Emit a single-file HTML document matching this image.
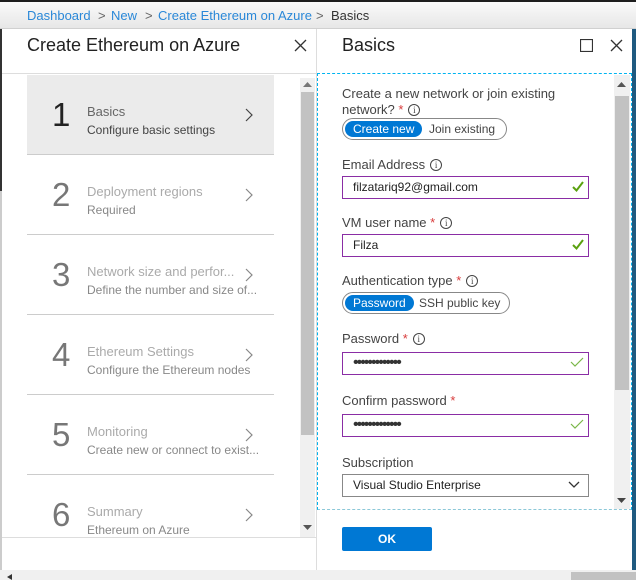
<!DOCTYPE html>
<html><head><meta charset="utf-8"><style>
*{margin:0;padding:0;box-sizing:border-box}
body{width:636px;height:580px;overflow:hidden;background:#fff;font-family:"Segoe UI","Liberation Sans",sans-serif;position:relative;color:#333}
.a{position:absolute}
.bc{left:0;top:0;width:636px;height:29px;background:linear-gradient(#1e1e1e 0,#1e1e1e 2px,#fafafa 2px,#e6e6e6 29px);border-bottom:1px solid #d0d0d0}
.bc span{position:absolute;top:8px;font-size:13px;color:#2a88d8}
.num{font-size:33px;color:#777;left:52px;font-weight:300}
.t1{left:87px;font-size:13px;color:#aaa}
.t2{left:87px;font-size:12px;color:#888}
.chev{left:244px}
.sep{left:27px;width:247px;height:1px;background:#ccc}
.lbl{left:342px;font-size:13px;color:#444}
.req{color:#d83b3b}
.info{display:inline-block;width:12px;height:12px;border:1px solid #444;border-radius:50%;font-size:9px;line-height:10px;text-align:center;vertical-align:1px;margin-left:5px;font-family:"Liberation Serif",serif;color:#444}
.inp{left:342px;width:247px;height:23px;border:1px solid #8a2da5;font-size:12px;padding:3px 0 0 10px;color:#222}
.pw{font-size:16px;padding-top:0;line-height:20px;letter-spacing:-2px;color:#333}
.ok{position:absolute;right:4px;top:2px}
.tog{left:342px;height:22px;border:1px solid #888;border-radius:11px;font-size:12px}
.tog b{position:absolute;top:2px;left:2px;height:16px;border-radius:8px;background:#0078d4;color:#fff;font-weight:normal;padding:0 8px;line-height:16px}
.tog i{position:absolute;top:2px;font-style:normal;line-height:16px;color:#444}
</style></head><body>
<div class="a bc"><span style="left:27px">Dashboard</span><span style="left:98px;color:#666">&gt;</span><span style="left:111px">New</span><span style="left:145px;color:#666">&gt;</span><span style="left:158px">Create Ethereum on Azure</span><span style="left:316px;color:#666">&gt;</span><span style="left:331px;color:#333">Basics</span></div>
<div class="a" style="left:0;top:29px;width:2px;height:162px;background:#333"></div>
<div class="a" style="left:0;top:191px;width:2px;height:379px;background:#ccc"></div>
<div class="a" style="left:632px;top:29px;width:4px;height:541px;background:#1f5a80"></div>
<div class="a" style="left:316px;top:29px;width:1px;height:541px;background:#ddd"></div>
<!-- left blade -->
<div class="a" style="left:27px;top:35px;font-size:18px;color:#222">Create Ethereum on Azure</div>
<svg class="a" style="left:294px;top:39px" width="13" height="13"><path d="M1 1L12 12M12 1L1 12" stroke="#333" stroke-width="1.3"/></svg>
<div class="a" style="left:2px;top:73px;width:314px;height:1px;background:#ddd"></div>
<div class="a" style="left:27px;top:75px;width:247px;height:79px;background:#ebebeb"></div>
<div class="a num" style="top:96px;color:#222">1</div>
<div class="a t1" style="top:104px;color:#666">Basics</div>
<div class="a t2" style="top:123px;color:#444">Configure basic settings</div>
<svg class="a chev" style="top:108px" width="10" height="14"><path d="M2 1L8 7L2 13" stroke="#444" fill="none" stroke-width="1.2"/></svg>
<div class="a sep" style="top:154px"></div>
<div class="a num" style="top:176px">2</div><div class="a t1" style="top:184px">Deployment regions</div><div class="a t2" style="top:203px">Required</div>
<svg class="a chev" style="top:188px" width="10" height="14"><path d="M2 1L8 7L2 13" stroke="#888" fill="none" stroke-width="1.2"/></svg>
<div class="a sep" style="top:234px"></div>
<div class="a num" style="top:256px">3</div><div class="a t1" style="top:264px">Network size and perfor...</div><div class="a t2" style="top:283px">Define the number and size of...</div>
<svg class="a chev" style="top:268px" width="10" height="14"><path d="M2 1L8 7L2 13" stroke="#888" fill="none" stroke-width="1.2"/></svg>
<div class="a sep" style="top:314px"></div>
<div class="a num" style="top:336px">4</div><div class="a t1" style="top:344px">Ethereum Settings</div><div class="a t2" style="top:363px">Configure the Ethereum nodes</div>
<svg class="a chev" style="top:348px" width="10" height="14"><path d="M2 1L8 7L2 13" stroke="#888" fill="none" stroke-width="1.2"/></svg>
<div class="a sep" style="top:394px"></div>
<div class="a num" style="top:416px">5</div><div class="a t1" style="top:424px">Monitoring</div><div class="a t2" style="top:443px">Create new or connect to exist...</div>
<svg class="a chev" style="top:428px" width="10" height="14"><path d="M2 1L8 7L2 13" stroke="#888" fill="none" stroke-width="1.2"/></svg>
<div class="a sep" style="top:474px"></div>
<div class="a num" style="top:496px">6</div><div class="a t1" style="top:504px">Summary</div><div class="a t2" style="top:523px">Ethereum on Azure</div>
<svg class="a chev" style="top:508px" width="10" height="14"><path d="M2 1L8 7L2 13" stroke="#888" fill="none" stroke-width="1.2"/></svg>
<div class="a" style="left:300px;top:78px;width:15px;height:459px;background:#f0f0f0"></div>
<div class="a" style="left:301px;top:92px;width:13px;height:343px;background:#c2c2c2"></div>
<svg class="a" style="left:303px;top:82px" width="9" height="6"><path d="M0 5L4.5 0L9 5Z" fill="#777"/></svg>
<svg class="a" style="left:303px;top:525px" width="9" height="6"><path d="M0 0L4.5 5L9 0Z" fill="#555"/></svg>
<div class="a" style="left:2px;top:537px;width:314px;height:1px;background:#ddd"></div>
<!-- right blade -->
<div class="a" style="left:342px;top:35px;font-size:18px;color:#222">Basics</div>
<svg class="a" style="left:580px;top:39px" width="13" height="13"><rect x="0.5" y="0.5" width="12" height="12" fill="none" stroke="#333" stroke-width="1.2"/></svg>
<svg class="a" style="left:610px;top:39px" width="13" height="13"><path d="M1 1L12 12M12 1L1 12" stroke="#333" stroke-width="1.3"/></svg>
<div class="a" style="left:317px;top:73px;width:315px;height:437px;border:1px dashed #00b4f0;border-bottom-color:#8cc8d8"></div>
<div class="a" style="left:614px;top:75px;width:16px;height:434px;background:#f0f0f0"></div>
<div class="a" style="left:615px;top:96px;width:14px;height:294px;background:#c2c2c2"></div>
<svg class="a" style="left:617px;top:82px" width="9" height="6"><path d="M0 5L4.5 0L9 5Z" fill="#555"/></svg>
<svg class="a" style="left:617px;top:498px" width="9" height="6"><path d="M0 0L4.5 5L9 0Z" fill="#444"/></svg>
<div class="a lbl" style="top:86px;line-height:16px">Create a new network or join existing<br>network? <span class="req">*</span><span class="info">i</span></div>
<div class="a tog" style="top:118px;width:165px"><b>Create new</b><i style="left:86px">Join existing</i></div>
<div class="a lbl" style="top:157px">Email Address<span class="info">i</span></div>
<div class="a inp" style="top:176px">filzatariq92@gmail.com<svg class="ok" width="12" height="14"><path d="M1 8L4.5 11.5L11 3" stroke="#5aa10f" fill="none" stroke-width="2"/></svg></div>
<div class="a lbl" style="top:215px">VM user name <span class="req">*</span><span class="info">i</span></div>
<div class="a inp" style="top:234px">Filza<svg class="ok" width="12" height="14"><path d="M1 8L4.5 11.5L11 3" stroke="#5aa10f" fill="none" stroke-width="2"/></svg></div>
<div class="a lbl" style="top:273px">Authentication type <span class="req">*</span><span class="info">i</span></div>
<div class="a tog" style="top:292px;width:168px"><b>Password</b><i style="left:76px">SSH public key</i></div>
<div class="a lbl" style="top:331px">Password <span class="req">*</span><span class="info">i</span></div>
<div class="a inp pw" style="top:352px">•••••••••••••<svg class="ok" width="14" height="14"><path d="M1 7L5 11L13 3" stroke="#7ab648" fill="none" stroke-width="1.2"/></svg></div>
<div class="a lbl" style="top:393px">Confirm password <span class="req">*</span></div>
<div class="a inp pw" style="top:414px">•••••••••••••<svg class="ok" width="14" height="14"><path d="M1 7L5 11L13 3" stroke="#7ab648" fill="none" stroke-width="1.2"/></svg></div>
<div class="a lbl" style="top:455px">Subscription</div>
<div class="a inp" style="top:474px;border-color:#888">Visual Studio Enterprise<svg class="ok" style="top:6px;right:8px" width="12" height="8"><path d="M1 1L6 6L11 1" stroke="#333" fill="none" stroke-width="1.3"/></svg></div>
<div class="a" style="left:342px;top:527px;width:90px;height:24px;background:#0078d4;border-radius:2px;color:#fff;font-size:12px;font-weight:bold;text-align:center;line-height:24px">OK</div>
<!-- bottom bar -->
<div class="a" style="left:0;top:570px;width:636px;height:10px;background:#f0f0f0"></div>
<div class="a" style="left:571px;top:572px;width:65px;height:8px;background:#c2c2c2"></div>
<svg class="a" style="left:7px;top:574px" width="5" height="6"><path d="M5 0L0 3L5 6Z" fill="#333"/></svg>
</body></html>
